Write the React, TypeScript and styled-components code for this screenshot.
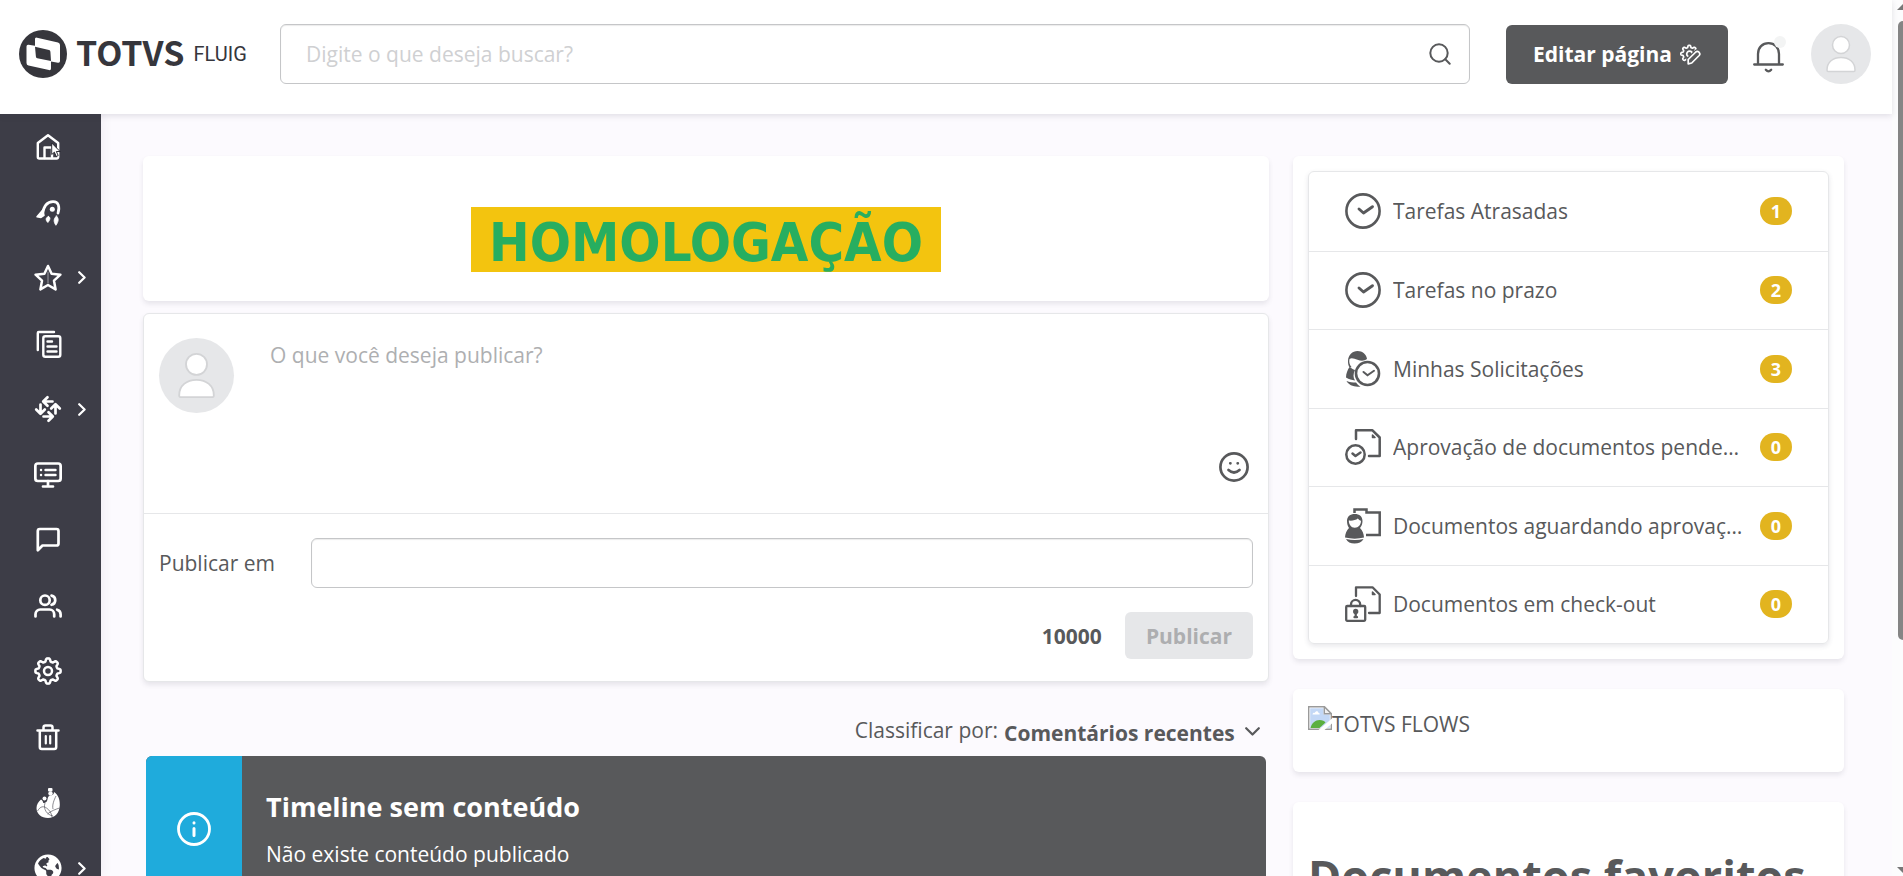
import React from 'react';
import styled, { createGlobalStyle } from 'styled-components';
import { FaGlobeAmericas } from 'react-icons/fa';

const ink = '#58595b';
const line = '#e6e7e9';
const sans = "'Open Sans', 'Noto Sans', sans-serif";

const GlobalStyle = createGlobalStyle`
  *, *::before, *::after { box-sizing: border-box; }
  body { margin: 0; background: #fcfafe; color: ${ink}; font: 400 21px/30px ${sans}; }
  button, input, textarea, select { font: inherit; color: inherit; }
  h1, h2, p, ul { margin: 0; padding: 0; }
  ul { list-style: none; }
  svg { display: block; flex: none; }
`;

/* ---------- page frame ---------- */

const Frame = styled.div`
  display: grid;
  grid-template-columns: minmax(0, 1fr) 11px;
  height: 100vh;
  overflow: hidden;
`;

const Page = styled.div`
  display: flex;
  flex-direction: column;
  min-width: 0;
  min-height: 0;
`;

const ScrollTrack = styled.div`
  display: flex;
  flex-direction: column;
  align-items: flex-end;
  padding: 4px 0 0;
  background: #fcfcfd;
  overflow: hidden;
`;

const ScrollThumb = styled.div`
  width: 5px;
  height: 71%;
  margin: 11px 0 auto;
  border-radius: 5px 0 0 5px;
  background: #858585;
`;

const Header = styled.header`
  position: relative;
  z-index: 2;
  flex: none;
  display: flex;
  align-items: center;
  height: 114px;
  padding: 0 21px 6px 19px;
  background: #fff;
  box-shadow: 0 2px 6px rgba(60, 60, 80, 0.14);
`;

const Brand = styled.a`
  display: flex;
  align-items: center;
  width: 261px;
  color: #36363c;
  text-decoration: none;
`;

const BrandName = styled.span`
  margin-left: 9px;
  padding-bottom: 4px;
  font: 700 34px/44px 'Noto Sans CJK JP', ${sans};
`;

const BrandProduct = styled.span`
  margin-left: 9px;
  font: 400 20px/44px Roboto, sans-serif;
`;

const SearchBox = styled.form`
  flex: 1;
  display: flex;
  align-items: center;
  height: 60px;
  padding: 0 18px 0 25px;
  border: 1px solid #c5c6c8;
  border-radius: 6px;
  box-shadow: inset 0 1px 1px rgba(0, 0, 0, 0.08);
`;

const SearchInput = styled.input`
  flex: 1;
  min-width: 0;
  padding: 0;
  border: 0;
  outline: 0;
  background: none;
  &::placeholder { color: #cfd0d2; opacity: 1; }
`;

const IconButton = styled.button`
  display: flex;
  padding: 0;
  border: 0;
  background: none;
  cursor: pointer;
`;

const EditButton = styled.button`
  display: flex;
  align-items: center;
  gap: 8px;
  height: 59px;
  margin-left: 36px;
  padding: 0 27px;
  border: 0;
  border-radius: 6px;
  background: ${ink};
  color: #fff;
  font-weight: 700;
  white-space: nowrap;
`;

const BellButton = styled(IconButton)`
  position: relative;
  margin: 6px 27px 0 25px;
`;

const BellDot = styled.span`
  position: absolute;
  top: -6px;
  right: -2px;
  width: 12px;
  height: 12px;
  border-radius: 50%;
  background: #f3f4f4;
`;

const AvatarCircle = styled.span<{ $size: number }>`
  flex: none;
  display: flex;
  align-items: center;
  justify-content: center;
  width: ${p => p.$size}px;
  height: ${p => p.$size}px;
  border-radius: 50%;
  background: #e6e7e9;
`;

const Body = styled.div`
  flex: 1;
  display: flex;
  min-height: 0;
`;

/* ---------- side navigation ---------- */

const Sidebar = styled.nav`
  flex: none;
  width: 101px;
  background: #3d3d47;
  overflow: hidden;
  box-shadow: 0 0 12px rgba(60, 40, 80, 0.08);
`;

const NavList = styled.ul`
  display: grid;
  grid-auto-rows: 1fr;
  height: 787px;
`;

const NavLink = styled.a`
  display: flex;
  align-items: center;
  gap: 16px;
  height: 100%;
  padding-left: 34px;
  color: #fff;
`;

const HomeMark = styled.span`
  position: relative;
`;

const Pointer = styled.svg`
  position: absolute;
  left: 17px;
  top: 9px;
`;

/* ---------- content ---------- */

const Main = styled.main`
  flex: 1;
  display: grid;
  grid-template-columns: minmax(0, 2fr) minmax(0, 1fr);
  align-items: start;
  min-width: 0;
  padding: 42px 36px 0 30px;
  overflow: hidden;
`;

const Column = styled.div<{ $gap: number }>`
  display: flex;
  flex-direction: column;
  gap: ${p => p.$gap}px;
  min-width: 0;
  padding: 0 12px;
`;

const Card = styled.section`
  background: #fff;
  border-radius: 6px;
  box-shadow: 0 3px 5px rgba(60, 60, 80, 0.11);
`;

const Banner = styled(Card)`
  display: flex;
  justify-content: center;
  padding: 51px 15px 29px;
`;

const BannerTitle = styled.h1`
  padding: 6px 18px 0;
  background: #f3c40f;
  color: #27ae60;
  font: 700 54px/59px 'DejaVu Sans Condensed', ${sans};
`;

const Composer = styled(Card)`
  border: 1px solid ${line};
`;

const ComposerTop = styled.div`
  display: flex;
  align-items: flex-start;
  padding: 24px 15px 27px;
  border-bottom: 1px solid ${line};
`;

const ComposerText = styled.textarea`
  flex: 1;
  height: 148px;
  margin-left: 30px;
  padding: 2px 6px;
  border: 0;
  outline: 0;
  resize: none;
  background: none;
  line-height: 30px;
  &::placeholder { color: #aeafb1; opacity: 1; }
`;

const EmojiButton = styled(IconButton)`
  align-self: flex-end;
  padding: 4px;
`;

const ComposerBottom = styled.div`
  display: flex;
  flex-direction: column;
  gap: 24px;
  padding: 24px 15px 22px;
`;

const TargetRow = styled.div`
  display: flex;
  align-items: center;
`;

const TargetLabel = styled.label`
  width: 152px;
`;

const TargetInput = styled.input`
  flex: 1;
  min-width: 0;
  height: 50px;
  padding: 0 12px;
  border: 1px solid #c5c6c8;
  border-radius: 6px;
  background: #fff;
  box-shadow: inset 0 1px 1px rgba(0, 0, 0, 0.08);
`;

const SubmitRow = styled.div`
  display: flex;
  align-items: center;
  justify-content: flex-end;
  gap: 23px;
  font-weight: 700;
`;

const PublishButton = styled.button`
  height: 47px;
  padding: 0 21px;
  border: 0;
  border-radius: 6px;
  background: #e6e7e9;
  color: #adaeb0;
  font-weight: 700;
`;

const Feed = styled.div`
  padding: 21px 3px 0;
`;

const SortRow = styled.div`
  display: flex;
  align-items: flex-start;
  justify-content: flex-end;
  gap: 6px;
  margin-bottom: 8px;
  padding-right: 6px;
`;

const SelectWrap = styled.span`
  position: relative;
  padding-top: 3px;
  display: flex;
  svg { position: absolute; right: 0; top: 12px; pointer-events: none; }
`;

const SortSelect = styled.select`
  appearance: none;
  height: 30px;
  padding: 0 25px 0 0;
  border: 0;
  outline: 0;
  background: none;
  font-weight: 700;
`;

const Alert = styled.div`
  display: flex;
  min-height: 146px;
  border-radius: 6px;
  overflow: hidden;
  background: ${ink};
  color: #fff;
`;

const AlertIcon = styled.div`
  display: flex;
  align-items: center;
  justify-content: center;
  width: 96px;
  background: #1fabdc;
`;

const AlertText = styled.div`
  padding: 32px 24px;
`;

const AlertTitle = styled.h2`
  margin-bottom: 13px;
  font: 700 27px/38px ${sans};
`;

const TaskCard = styled(Card)`
  padding: 15px;
`;

const TaskList = styled.ul`
  display: grid;
  grid-template-columns: minmax(0, 1fr);
  grid-auto-rows: 1fr;
  min-height: 473px;
  border: 1px solid ${line};
  border-radius: 6px;
  box-shadow: 0 2px 5px rgba(60, 60, 80, 0.12);
`;

const TaskItem = styled.li`
  & + & { border-top: 1px solid ${line}; }
`;

const TaskLink = styled.a`
  display: flex;
  align-items: center;
  height: 100%;
  padding: 0 36px;
  color: inherit;
  text-decoration: none;
`;

const TaskLabel = styled.span`
  flex: 1;
  min-width: 0;
  margin: 0 15px 0 12px;
  overflow: hidden;
  white-space: nowrap;
  text-overflow: ellipsis;
`;

const Badge = styled.span`
  width: 32px;
  border-radius: 14px;
  background: #e2b41f;
  color: #fff;
  font: 700 18px/28px ${sans};
  text-align: center;
`;

const FlowCard = styled(Card)`
  display: flex;
  align-items: flex-start;
  padding: 17px 15px 33px;
`;

const FlowText = styled.span`
  padding-top: 3px;
`;

const FavoritesCard = styled(Card)`
  padding: 43px 15px 60px;
`;

const FavoritesTitle = styled.h2`
  font: 700 45px/61px ${sans};
  white-space: nowrap;
`;

/* ---------- drawings ---------- */

const Glyph = ({ children, w = 2.7, size = 28 }: { children: React.ReactNode; w?: number; size?: number }) => (
  <svg width={size} height={size} viewBox={`0 0 ${size} ${size}`} fill="none" stroke="currentColor"
    strokeWidth={w} strokeLinecap="round" strokeLinejoin="round" aria-hidden="true">
    {children}
  </svg>
);

/* Closed outline of a wheel with eight soft teeth. */
function cog(cx: number, cy: number, inner: number, outer: number): string {
  const mid = (inner + outer) / 2;
  const amp = (outer - inner) / 2;
  const pts: string[] = [];
  for (let i = 0; i < 160; i++) {
    const t = (i / 160) * Math.PI * 2;
    const r = mid + amp * Math.tanh(2 * Math.cos(8 * t));
    pts.push(`${(cx + r * Math.sin(t)).toFixed(2)} ${(cy - r * Math.cos(t)).toFixed(2)}`);
  }
  return `M${pts.join('L')}Z`;
}

const Logo = () => (
  <svg width="48" height="48" viewBox="0 0 48 48" aria-hidden="true">
    <circle cx="24" cy="24" r="24" fill="#36363c" />
    <path d="M17 7.500 39 12.500q2 .5 2 2.500V31q0 2-2 1.700L32 31.500v7q0 2-2 1.600L9.500 35.500q-2-.5-2-2.500V16.500q0-2 2-1.700L16 15.800V8.500Z" fill="#fff" />
    <path d="M16 16.800 30 20q1.300.3 1.400 1.700L32 31 18.300 28.300Q17 28 16.900 26.500Z" fill="#36363c" />
  </svg>
);

const Person = ({ size }: { size: number }) => (
  <svg width={size} height={size} viewBox="0 0 38 38" fill="#fff" stroke="#d3d4d6" strokeWidth="1.500" aria-hidden="true">
    <circle cx="19" cy="10" r="8.500" />
    <path d="M6 36.500c-.8 0-1-.6-1-1.500C5 27 11 22.500 19 22.500S33 27 33 35c0 .9-.2 1.500-1 1.500Z" />
  </svg>
);

const HomeIcon = () => (
  <HomeMark>
    <Glyph w={2.4}>
      <path d="M3.800 10 14 2.200 24.200 10v14a1.500 1.500 0 0 1-1.500 1.500H5.300A1.500 1.500 0 0 1 3.800 24Z" />
      <path d="M10.500 25V14.500h7.500V25" />
    </Glyph>
    <Pointer width="10" height="16" viewBox="0 0 10 16" aria-hidden="true">
      <path d="M.7 1v11.500l2.700-2.300 1.800 4.300 2-.9-1.800-4.100h3.700Z" fill="#fff" stroke="#1c1c24" strokeWidth=".9" />
    </Pointer>
  </HomeMark>
);

const RocketIcon = () => (
  <Glyph>
    <path d="M8.500 16C9.500 9 13 3.800 19 3.600c5.500-.1 7 5 5 11.500" />
    <path d="M3 18.800 8.800 12l1.200 5.500-3 2Z" fill="currentColor" strokeWidth="1.500" />
    <circle cx="18.300" cy="11.300" r="2.500" fill="currentColor" stroke="none" />
    <path d="M14.500 18.500c2 .8 2.200 2.500-.6 6-2.400-2.200-2.600-5 .6-6ZM22.500 18c2.500 2.500 2.200 5.500-.6 9.300-2.400-3.500-2.600-6.300.6-9.300Z" fill="currentColor" strokeWidth=".8" />
  </Glyph>
);

const StarIcon = () => (
  <Glyph w={2.5}>
    <path d="m14 2 3.600 7.700 8.800 1-6.400 6 1.600 8.700L14 21l-7.600 4.400L8 16.700l-6.400-6 8.800-1Z" />
    <path d="M14 8v11" strokeWidth="1" opacity=".5" />
  </Glyph>
);

const DocsIcon = () => (
  <Glyph w={2.4}>
    <path d="M3.800 20V3a1 1 0 0 1 1-1H20" />
    <rect x="9.300" y="6.200" width="17" height="20.500" rx="2" />
    <path d="M13.500 11.500h4.500M13.500 16.500h9M13.500 21.500h9" />
  </Glyph>
);

const ArrowsIcon = () => (
  <Glyph>
    {[0, 90, 180, 270].map(a => (
      <g key={a} transform={`rotate(${a} 14 14)`}>
        <path d="M18.500 6.500H9.500M13.500 2.200 9.200 6.500l4.300 4.300" />
      </g>
    ))}
  </Glyph>
);

const MonitorIcon = () => (
  <Glyph>
    <rect x="1.350" y="2.500" width="25.300" height="17.500" rx="2.500" />
    <path d="M14 20v5M9 25.500h10" />
    <path d="M7 9h.1M7 14h.1M11.500 9h10M11.500 14h10" strokeWidth="2.400" />
  </Glyph>
);

const ChatIcon = () => (
  <Glyph>
    <path d="M24.500 17.500a2 2 0 0 1-2 2H8.500L3.800 24.300V5a2 2 0 0 1 2-2h16.700a2 2 0 0 1 2 2Z" />
  </Glyph>
);

const UsersIcon = () => (
  <Glyph>
    <circle cx="11" cy="8.200" r="4.700" />
    <path d="M1.500 24.500v-2.300a4.700 4.700 0 0 1 4.700-4.700h9.300a4.700 4.700 0 0 1 4.700 4.700v2.300" />
    <path d="M17.500 3.600a4.700 4.700 0 0 1 0 9.200M26.600 24.500v-2.300a4.700 4.700 0 0 0-3.500-4.500" />
  </Glyph>
);

const CogIcon = () => (
  <Glyph w={2.5}>
    <path d={cog(14, 14, 9.500, 12.700)} />
    <circle cx="14" cy="14" r="4" />
  </Glyph>
);

const TrashIcon = () => (
  <Glyph w={2.5}>
    <path d="M3.500 7.500h21M9.500 7V4.500a2 2 0 0 1 2-2h5a2 2 0 0 1 2 2V7" />
    <path d="M5.800 8v16a2 2 0 0 0 2 2h12.400a2 2 0 0 0 2-2V8" />
    <path d="M11.800 13v7.500M16.200 13v7.500" strokeWidth="2.200" />
  </Glyph>
);

const FlameIcon = () => (
  <svg width="28" height="32" viewBox="0 0 28 32" fill="currentColor" aria-hidden="true">
    <path d="M20 5c4 2.500 6 7 5.800 13C25.500 26 21 31 14 31 7.500 31 2.500 27 2.500 21c0-3.500 2-6.500 4.500-8.500 1 .3 2 1.800 2.300 3.500 1.500 0 3-.5 3.700-2 .8-1.700.5-3.500 1.500-4.500C16 8 20 9 20 5Z" />
    <circle cx="10.500" cy="11.500" r="2" />
    <circle cx="16.500" cy="6.500" r="2.200" />
    <rect x="14" y="1" width="4.500" height="3.500" rx="1" />
    <path d="M3.500 24c3-5 6-5 9-3s5 5 5.500 9M11 16c-2 6 2 12 8 13M25.500 21c-3 1-9 3-12 6M22 9c-2 4-4 9-3 13" fill="none" stroke="#3d3d47" strokeWidth=".6" />
  </svg>
);

const Chevron = ({ down }: { down?: boolean }) => (
  <svg width={down ? 15 : 8} height={down ? 9 : 13} viewBox={down ? '0 0 15 9' : '0 0 8 13'} fill="none"
    stroke="currentColor" strokeWidth="2.200" strokeLinecap="round" strokeLinejoin="round" aria-hidden="true">
    <path d={down ? 'M1.200 1.200 7.500 7.500 13.800 1.200' : 'M1.200 1.200 6.600 6.500 1.200 11.800'} />
  </svg>
);

const EditIcon = () => (
  <Glyph size={21} w={1.7}>
    <path d={cog(9.300, 9.800, 6.300, 8.500)} />
    <circle cx="9.500" cy="10" r="2.800" />
    <path d="M8.200 19.800v-4.300L15.800 8q1.500-1.300 3.200.2 1.600 1.800.2 3.300L11.700 19Z" fill={ink} stroke={ink} strokeWidth="4" />
    <path d="M8.200 19.800v-4.300L15.800 8q1.500-1.300 3.200.2 1.600 1.800.2 3.300L11.700 19Z" fill={ink} />
  </Glyph>
);

const TaskClock = () => (
  <Glyph size={36} w={2.6}>
    <circle cx="18" cy="18" r="16.600" />
    <path d="m14 16 4.500 4 9-6.300" strokeWidth="2.900" />
  </Glyph>
);

const PersonClock = () => (
  <svg width="36" height="36" viewBox="0 0 36 36" aria-hidden="true">
    <path d="M3 10C3 4 7.500 0 12.500 0 17.500 0 21.500 3.500 22 8c-3 2.200-6 2-9.500.8C9.500 8 7 6.500 4.500 8c-.7 2.800 0 6 2 8-.8 1-2 .8-2.600-.7C3.200 13.500 3 12 3 10Z" fill={ink} />
    <path d="M4.500 16c3 2 4.500 3 5.500 3-2 4-2 7.500 0 10.500-3-.5-6-1-9-3 0-4 1.500-7.500 3.500-10.500ZM1.500 30c3 1.300 6 1.500 9.500 1.500 1 1.500 2.500 3 4.500 4C9.500 36.500 3.500 34 1.500 30Z" fill={ink} />
    <circle cx="22.500" cy="22.500" r="11.500" fill="#fff" stroke={ink} strokeWidth="2.600" />
    <path d="m18.500 21 4 3.300 6.500-4.500" fill="none" stroke={ink} strokeWidth="2" strokeLinecap="round" />
  </svg>
);

const Sheet = () => (
  <>
    <path d="M11 10V1.300h16.500l7.200 7.200V27H24" />
    <path d="M27.500 6v2.500H30Z" fill="currentColor" strokeWidth="1.500" />
  </>
);

const SheetCheck = () => (
  <Glyph size={36} w={2.5}>
    <Sheet />
    <circle cx="10.500" cy="25.500" r="9.200" />
    <path d="m7.500 24.500 3 2.500 5-3.500" />
  </Glyph>
);

const SheetLock = () => (
  <Glyph size={36} w={2.3}>
    <Sheet />
    <rect x="1.200" y="20" width="19" height="14.800" rx="1" />
    <path d="M6 20v-1.500a4.600 4.600 0 0 1 9.200 0V20" />
    <path d="M10.700 26v5M9.500 31.200h2.500" />
    <circle cx="10.700" cy="25.500" r="1.500" fill="currentColor" />
  </Glyph>
);

const FolderPerson = () => (
  <svg width="36" height="36" viewBox="0 0 36 36" aria-hidden="true">
    <path d="M9.500 5V1.500h12V4.500h13.200V27H21" fill="none" stroke={ink} strokeWidth="2.500" />
    <path d="M2 13c0-4.500 3.200-7 7.800-7s7.700 2.500 7.700 7c0 3-1 5-2.500 7 2.500 2.500 3.800 5.500 4 9.500-6 1.500-12.500 1.500-19 0 .2-4 1.500-7 4-9.500C2.800 18 2 16 2 13Z" fill={ink} />
    <path d="M3.800 12.500c3 .5 7-.3 9-2 1 1.300 2 2 3.200 2.200 0 3.800-2.500 7-6.200 7s-6-3.200-6-7.200Z" fill="#fff" />
    <path d="M1 31c6 1.300 12 1.300 17.500 0-1.500 3-5 4.500-9 4.500S2.500 34 1 31Z" fill={ink} />
  </svg>
);

const BrokenImage = () => (
  <svg width="24" height="24" viewBox="0 0 24 24" role="img" aria-label="Imagem indisponível">
    <path d="M.7.7h15.600l7 7v15.600H.7Z" fill="#fff" stroke="#9a9a9a" strokeWidth="1.400" />
    <path d="M2.200 2.200h13.300v6.300h6.300v13.300H2.200Z" fill="#c3d8f6" />
    <path d="M4.500 8.500c0-1.500 1.500-2 2.300-1.500C7.500 4.500 10.500 5 10.500 7c1.300 0 1.800 1.500.8 1.500Z" fill="#fff" />
    <path d="M2.500 22c1-5 5-8 9-8 3 0 5 1 6 2.500L11.500 22Z" fill="#5bb040" />
    <path d="M16.300.7v7h7Z" fill="#f2f2f2" stroke="#9a9a9a" strokeWidth="1.400" />
    <path d="M10.500 24 24 12.500v5L16.500 24Z" fill="#fff" />
  </svg>
);

/* ---------- data ---------- */

const navItems = [
  { name: 'Início', icon: <HomeIcon /> },
  { name: 'Lançamentos', icon: <RocketIcon /> },
  { name: 'Favoritos', icon: <StarIcon />, more: true },
  { name: 'Documentos', icon: <DocsIcon /> },
  { name: 'Processos', icon: <ArrowsIcon />, more: true },
  { name: 'Páginas', icon: <MonitorIcon /> },
  { name: 'Conversas', icon: <ChatIcon /> },
  { name: 'Pessoas', icon: <UsersIcon /> },
  { name: 'Configurações', icon: <CogIcon /> },
  { name: 'Lixeira', icon: <TrashIcon /> },
  { name: 'Destaques', icon: <FlameIcon /> },
  { name: 'Portal', icon: <FaGlobeAmericas size={28} />, more: true },
];

const tasks = [
  { label: 'Tarefas Atrasadas', count: 1, icon: <TaskClock /> },
  { label: 'Tarefas no prazo', count: 2, icon: <TaskClock /> },
  { label: 'Minhas Solicitações', count: 3, icon: <PersonClock /> },
  { label: 'Aprovação de documentos pendentes', count: 0, icon: <SheetCheck /> },
  { label: 'Documentos aguardando aprovação', count: 0, icon: <FolderPerson /> },
  { label: 'Documentos em check-out', count: 0, icon: <SheetLock /> },
];

export default function App() {
  return (
    <Frame>
      <GlobalStyle />
      <Page>
        <Header>
          <Brand href="#">
            <Logo />
            <BrandName>TOTVS</BrandName>
            <BrandProduct>FLUIG</BrandProduct>
          </Brand>
          <SearchBox role="search">
            <SearchInput type="text" aria-label="Buscar" placeholder="Digite o que deseja buscar?" />
            <IconButton type="button" aria-label="Buscar">
              <Glyph size={22} w={2}>
                <circle cx="10" cy="10" r="8.700" />
                <path d="m16.300 16.300 4.400 4.400" />
              </Glyph>
            </IconButton>
          </SearchBox>
          <EditButton type="button">Editar página <EditIcon /></EditButton>
          <BellButton type="button" aria-label="Notificações">
            <BellDot />
            <Glyph size={31} w={2.3}>
              <path d="M1.200 22.500h28.600M5 22V12C5 5.500 9.500 1.200 15.500 1.200S26 5.500 26 12v10" />
              <path d="M12.800 27.800q2.700 3 5.400 0" />
            </Glyph>
          </BellButton>
          <AvatarCircle $size={60}><Person size={38} /></AvatarCircle>
        </Header>
        <Body>
          <Sidebar aria-label="Menu principal">
            <NavList>
              {navItems.map(item => (
                <li key={item.name}>
                  <NavLink href="#" aria-label={item.name}>
                    {item.icon}
                    {item.more && <Chevron />}
                  </NavLink>
                </li>
              ))}
            </NavList>
          </Sidebar>
          <Main>
            <Column $gap={12}>
              <Banner><BannerTitle>HOMOLOGAÇÃO</BannerTitle></Banner>
              <Composer as="form">
                <ComposerTop>
                  <AvatarCircle $size={75}><Person size={47} /></AvatarCircle>
                  <ComposerText aria-label="Publicação" placeholder="O que você deseja publicar?" />
                  <EmojiButton type="button" aria-label="Emojis">
                    <Glyph size={30}>
                      <circle cx="15" cy="15" r="13.600" />
                      <path d="M9.500 18q5.500 5 11 0" />
                      <path d="M11.300 11.300h.1M18.700 11.300h.1" strokeWidth="2.800" />
                    </Glyph>
                  </EmojiButton>
                </ComposerTop>
                <ComposerBottom>
                  <TargetRow>
                    <TargetLabel htmlFor="target">Publicar em</TargetLabel>
                    <TargetInput id="target" type="text" />
                  </TargetRow>
                  <SubmitRow>
                    <span>10000</span>
                    <PublishButton type="button" disabled>Publicar</PublishButton>
                  </SubmitRow>
                </ComposerBottom>
              </Composer>
              <Feed>
                <SortRow>
                  <label htmlFor="sort">Classificar por:</label>
                  <SelectWrap>
                    <SortSelect id="sort"><option>Comentários recentes</option></SortSelect>
                    <Chevron down />
                  </SelectWrap>
                </SortRow>
                <Alert role="status">
                  <AlertIcon>
                    <Glyph size={34} w={2.8}>
                      <circle cx="17" cy="17" r="15.500" />
                      <path d="M17 16.500v7M17 10.800v.3" strokeWidth="3" />
                    </Glyph>
                  </AlertIcon>
                  <AlertText>
                    <AlertTitle>Timeline sem conteúdo</AlertTitle>
                    <p>Não existe conteúdo publicado</p>
                  </AlertText>
                </Alert>
              </Feed>
            </Column>
            <Column $gap={30}>
              <TaskCard>
                <TaskList>
                  {tasks.map(t => (
                    <TaskItem key={t.label}>
                      <TaskLink href="#">
                        {t.icon}
                        <TaskLabel>{t.label}</TaskLabel>
                        <Badge>{t.count}</Badge>
                      </TaskLink>
                    </TaskItem>
                  ))}
                </TaskList>
              </TaskCard>
              <FlowCard>
                <BrokenImage />
                <FlowText>TOTVS FLOWS</FlowText>
              </FlowCard>
              <FavoritesCard>
                <FavoritesTitle>Documentos favoritos</FavoritesTitle>
              </FavoritesCard>
            </Column>
          </Main>
        </Body>
      </Page>
      <ScrollTrack aria-hidden="true">
        <svg width="6" height="6" viewBox="0 0 6 6"><path d="M0 6 6 0v6Z" fill="#777" /></svg>
        <ScrollThumb />
        <svg width="6" height="9" viewBox="0 0 6 9"><path d="M0 0h6v6Z" fill="#777" /></svg>
      </ScrollTrack>
    </Frame>
  );
}
